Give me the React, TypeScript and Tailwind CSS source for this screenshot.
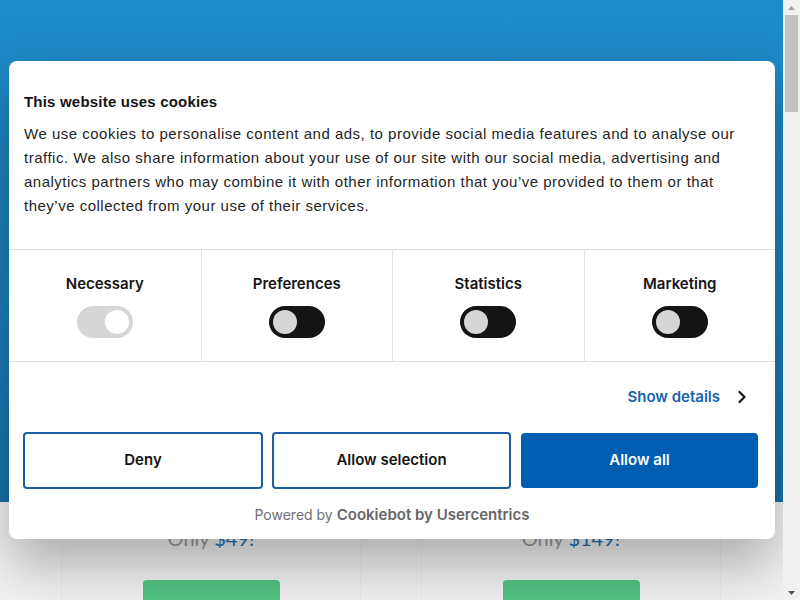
import React from 'react';

const categories = [
  { name: 'Necessary', locked: true },
  { name: 'Preferences', locked: false },
  { name: 'Statistics', locked: false },
  { name: 'Marketing', locked: false },
];

const plans = [
  { price: '$49!' },
  { price: '$149!' },
];

const Toggle = ({ locked }: { locked: boolean }) => (
  <div
    className={
      locked
        ? 'w-[56px] h-[32px] rounded-full bg-[#d6d6d6] flex items-center justify-end px-[4px]'
        : 'w-[56px] h-[32px] rounded-full bg-[#141414] flex items-center justify-start px-[4px]'
    }
  >
    <div className={locked ? 'w-[24px] h-[24px] rounded-full bg-white' : 'w-[24px] h-[24px] rounded-full bg-[#d6d6d6]'} />
  </div>
);

const Scrollbar = () => (
  <div className="w-[17px] h-full bg-[#f1f1f1] flex flex-col items-center">
    <div className="h-[15px] w-full flex items-center justify-center">
      <svg width="7" height="4" viewBox="0 0 7 4">
        <path d="M3.5 0L7 4H0z" fill="#a3a3a3" />
      </svg>
    </div>
    <div className="w-[13px] h-[97px] bg-[#c1c1c1]" />
    <div className="flex-1" />
    <div className="h-[15px] w-full flex items-center justify-center">
      <svg width="7" height="4" viewBox="0 0 7 4">
        <path d="M0 0H7L3.5 4z" fill="#505050" />
      </svg>
    </div>
  </div>
);

export default function App() {
  return (
    <div className="w-[800px] h-[600px] flex overflow-hidden">
      <div className="relative w-[783px] h-full bg-[#f3f3f3] overflow-hidden">
        {/* page behind the banner */}
        <div className="h-[502px] bg-gradient-to-b from-[#1f8ccc] to-[#1872ad]" />
        <div className="flex gap-[60px] pl-[61px]">
          {plans.map((plan, i) => (
            <div key={i} className="w-[300px] h-[120px] flex flex-col items-center border-x border-[#e9edf1]">
              <div className="pt-[21px] leading-[30px] text-[20px] text-[#9a9a9a]" style={{ fontFamily: 'Lato, sans-serif' }}>
                Only <span className="text-[#2a6fb0]">{plan.price}</span>
              </div>
              <div className="mt-[27px] w-[137px] h-[40px] rounded-[4px] bg-[#52c483]" />
            </div>
          ))}
        </div>

        {/* cookie banner */}
        <div className="absolute left-[9px] top-[61px] w-[766px] bg-white rounded-[8px] shadow-[0_26px_56px_rgba(0,0,0,0.3)]">
          <div className="pt-[29px] px-[15px] pb-[31px] text-[#141414]" style={{ fontFamily: '"Liberation Sans", Arial, sans-serif' }}>
            <h2 className="text-[15px] leading-[24px] font-bold tracking-[0.2px]">This website uses cookies</h2>
            <p className="mt-[8px] text-[15px] leading-[24px] text-[#1f1f1f] tracking-[0.5px]">
              We use cookies to personalise content and ads, to provide social media features and to analyse our
              traffic. We also share information about your use of our site with our social media, advertising and
              analytics partners who may combine it with other information that you’ve provided to them or that
              they’ve collected from your use of their services.
            </p>
          </div>

          <div className="grid grid-cols-4 border-y border-[#e2e2e2]" style={{ fontFamily: 'Inter, sans-serif' }}>
            {categories.map((c, i) => (
              <div
                key={c.name}
                className={
                  i === 0
                    ? 'h-[111px] flex flex-col items-center pt-[24px]'
                    : 'h-[111px] flex flex-col items-center pt-[24px] border-l border-[#e2e2e2]'
                }
              >
                <span className="text-[15px] leading-[20px] font-semibold text-[#141414]">{c.name}</span>
                <div className="mt-[12px]">
                  <Toggle locked={c.locked} />
                </div>
              </div>
            ))}
          </div>

          <div style={{ fontFamily: 'Inter, sans-serif' }}>
            <div className="flex justify-end items-center gap-[17px] pt-[25px] pb-[25px] pr-[28px]">
              <span className="text-[15px] leading-[20px] font-semibold text-[#1863ae]">Show details</span>
              <svg width="10" height="14" viewBox="0 0 10 14" fill="none">
                <path d="M2.5 2l5 5-5 5" stroke="#141414" strokeWidth="2.2" strokeLinecap="round" strokeLinejoin="round" />
              </svg>
            </div>

            <div className="flex gap-[9px] pl-[14px] pr-[17px]">
              <button className="w-[240px] h-[57px] rounded-[4px] border-2 border-[#1a5fa5] bg-white text-[15px] font-semibold text-[#141414]">
                Deny
              </button>
              <button className="w-[239px] h-[57px] rounded-[4px] border-2 border-[#1a5fa5] bg-white text-[15px] font-semibold text-[#141414]">
                Allow selection
              </button>
              <button className="flex-1 ml-[1px] h-[55px] mt-[1px] rounded-[4px] border-2 border-[#005eb2] bg-[#005eb2] text-[15px] font-semibold text-white">
                Allow all
              </button>
            </div>

            <div className="pt-[16px] pb-[14px] flex justify-center items-baseline gap-[4px] leading-[20px] text-[#6f6f6f]">
              <span className="text-[14px]">Powered by</span>
              <span className="text-[15px] font-semibold text-[#666666]">Cookiebot by Usercentrics</span>
            </div>
          </div>
        </div>
      </div>
      <Scrollbar />
    </div>
  );
}
